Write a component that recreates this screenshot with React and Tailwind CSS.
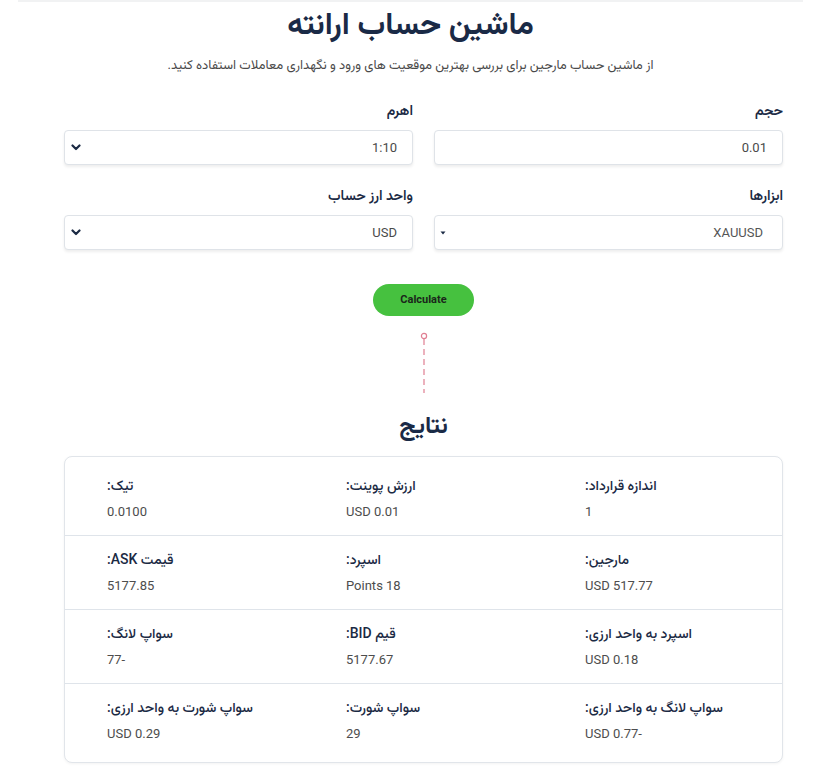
import React from "react";

const FONT = { fontFamily: 'Roboto, "Vazirmatn", "Noto Sans Arabic", "DejaVu Sans", sans-serif' };

function Chevron() {
  return (
    <svg width="10" height="7" viewBox="0 0 10 7" className="shrink-0">
      <path d="M1.5 1.5 L5 5 L8.5 1.5" fill="none" stroke="#1b2a44" strokeWidth="2.2" strokeLinecap="round" strokeLinejoin="round" />
    </svg>
  );
}

function Field({ label, value, icon, pr = "pr-[15px]", textColor = "text-[#4a4a4a]" }) {
  return (
    <div className="flex flex-col">
      <div className="h-[20px] leading-[20px] text-[14px] font-semibold text-[#1b2a44] text-right">{label}</div>
      <div className={`mt-[10px] h-[35px] flex items-center justify-between rounded-[4px] border border-[#dfe3e8] bg-white shadow-[0_2px_3px_rgba(0,0,0,0.07)] ${pr} pl-[6px]`}>
        <span className={`text-[13px] ${textColor}`} dir="ltr">{value}</span>
        {icon}
      </div>
    </div>
  );
}

const rows = [
  [
    ["اندازه قرارداد:", "1"],
    ["ارزش پوینت:", "USD 0.01"],
    ["تیک:", "0.0100"],
  ],
  [
    ["مارجین:", "USD 517.77"],
    ["اسپرد:", "Points 18"],
    ["قیمت ASK:", "5177.85"],
  ],
  [
    ["اسپرد به واحد ارزی:", "USD 0.18"],
    ["قیم BID:", "5177.67"],
    ["سواپ لانگ:", "77-"],
  ],
  [
    ["سواپ لانگ به واحد ارزی:", "USD 0.77-"],
    ["سواپ شورت:", "29"],
    ["سواپ شورت به واحد ارزی:", "USD 0.29"],
  ],
];

export default function App() {
  return (
    <div dir="rtl" className="w-[821px] min-h-[774px] bg-white overflow-hidden" style={FONT}>
      <div className="mx-[18px] h-[2px] bg-[#f1f2f3]" />
      <div className="flex flex-col items-center">
        <h1 className="mt-[1px] text-[31px] leading-[42px] font-bold text-[#1a2a46]">ماشین حساب ارانته</h1>
        <p className="mt-[10px] text-[13px] leading-[20px] text-[#4a4a4a]">
          از ماشین حساب مارجین برای بررسی بهترین موقعیت های ورود و نگهداری معاملات استفاده کنید.
        </p>
      </div>

      <div className="mr-[38px] w-[719px] mt-[25px]">
        <div className="grid grid-cols-2 gap-x-[21px] gap-y-[20px]">
          <Field label="حجم" value="0.01" />
          <Field label="اهرم" value="1:10" icon={<Chevron />} />
          <Field
            label="ابزارها"
            value="XAUUSD"
            pr="pr-[19px]"
            textColor="text-[#555]"
            icon={
              <svg width="6" height="4" viewBox="0 0 6 4" className="shrink-0 ml-[-1px]">
                <path d="M0.5 0.5 L5.5 0.5 L3 3.5 Z" fill="#1b2a44" />
              </svg>
            }
          />
          <Field label="واحد ارز حساب" value="USD" icon={<Chevron />} />
        </div>

        <div className="flex flex-col items-center mt-[34px]">
          <button className="w-[101px] h-[32px] rounded-full bg-[#46c13f] text-[11px] font-bold text-[#1a261a]" dir="ltr">
            Calculate
          </button>
          <svg width="10" height="62" viewBox="0 0 10 62" className="mt-[16px]">
            <circle cx="5" cy="4" r="2.6" fill="white" stroke="#e07f92" strokeWidth="1.2" />
            <line x1="5" y1="7" x2="5" y2="61" stroke="#e07f92" strokeWidth="1.2" strokeDasharray="6 4" />
          </svg>
          <h2 className="mt-[14px] text-[24px] leading-[34px] font-bold text-[#1a2a46]">نتایج</h2>
        </div>

        <div className="mt-[14px] rounded-[8px] border border-[#e1e5ea] bg-white shadow-[0_1px_3px_rgba(0,0,0,0.05)] py-[5px]">
          {rows.map((row, i) => (
            <div key={i} className={`grid grid-cols-3 ${i > 0 ? "border-t border-[#dfe4ea]" : ""}`}>
              {row.map(([label, value], j) => (
                <div key={j} className="flex flex-col items-end pl-[42px] pt-[13px] pb-[13px]">
                  <div dir="rtl" className="h-[20px] leading-[20px] text-[14px] font-medium text-[#1b2a44]">{label}</div>
                  <div dir="ltr" className="mt-[7px] h-[20px] leading-[20px] text-[13px] text-[#4d4d4d] self-end">{value}</div>
                </div>
              ))}
            </div>
          ))}
        </div>
      </div>
    </div>
  );
}
